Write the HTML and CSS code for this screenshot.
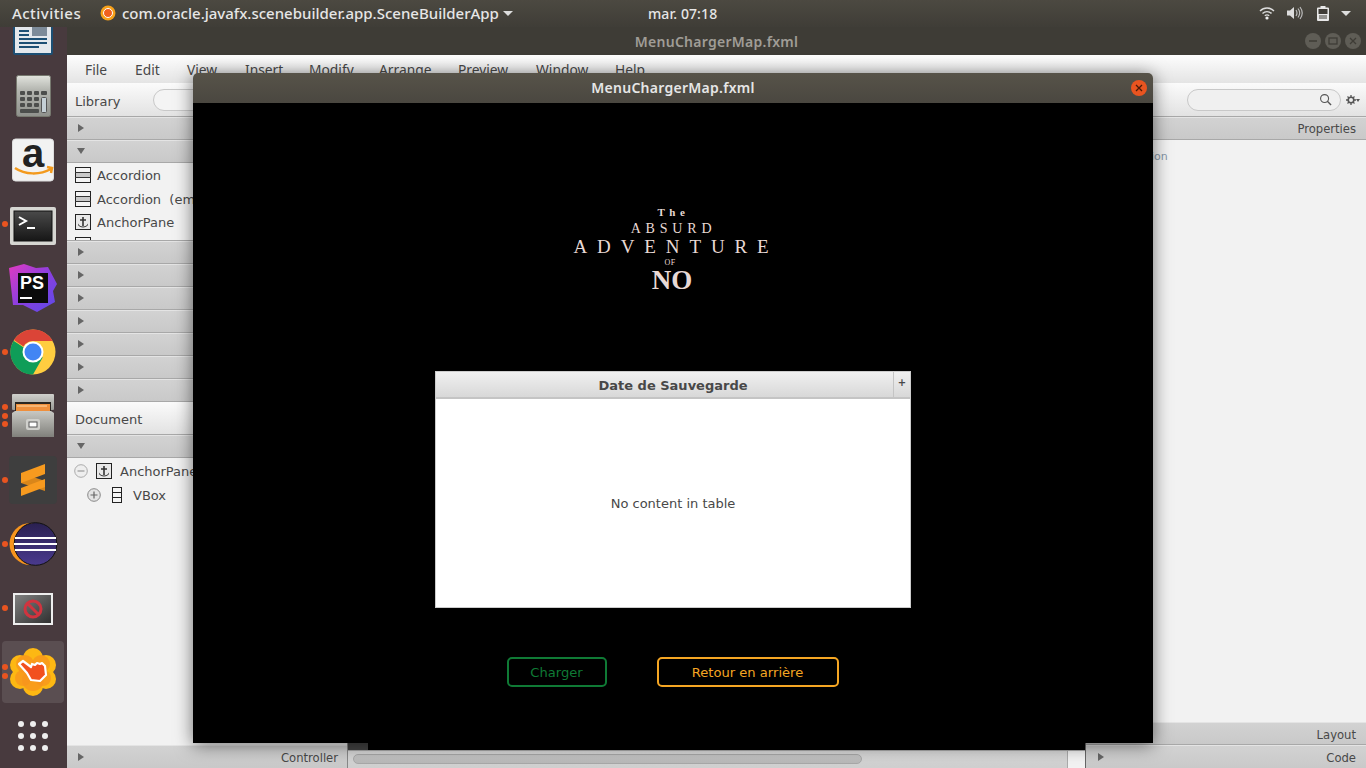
FILE: index.html
```html
<!DOCTYPE html>
<html lang="fr">
<head>
<meta charset="utf-8">
<title>MenuChargerMap.fxml</title>
<link rel="stylesheet" href="styles.css">
</head>
<body>
<svg class="defs" width="0" height="0" aria-hidden="true">
  <defs>
    <symbol id="acc" viewBox="0 0 16 16"><rect x=".5" y=".5" width="15" height="15" fill="#f4f4f4" stroke="#222"/><rect x="1" y="5" width="14" height="6" fill="#c9c9c9"/><path d="M0 5.500h16M0 10.500h16" stroke="#333"/></symbol>
    <symbol id="anc" viewBox="0 0 16 16"><rect x=".5" y=".5" width="15" height="15" fill="#e8e8e8" stroke="#222"/><path d="M8 3v9M5 6h6" fill="none" stroke="#333" stroke-width="1.600"/><path d="M3 9.500c.8 2 2.500 3 5 3s4.200-1 5-3v1.500c-1 1.500-2.800 2.500-5 2.500s-4-1-5-2.500z" fill="#333"/></symbol>
    <symbol id="arrow-r" viewBox="0 0 6 8"><path d="M0 0l6 4-6 4z" fill="#666"/></symbol>
    <symbol id="arrow-d" viewBox="0 0 8 6"><path d="M0 0h8l-4 6z" fill="#666"/></symbol>
  </defs>
</svg>

<div class="desktop">
  <nav class="dock">
    <div class="dock-item">
      <svg viewBox="0 0 64 64"><rect x="12" y="8" width="40" height="47" rx="2" fill="#1c4f74"/><rect x="14" y="10" width="36" height="43" fill="#e4e8ec"/><rect x="31" y="27" width="15" height="9" fill="#7d8b99"/><path d="M18 31h10M18 35h10M18 39h28M18 43h28M18 47h20" stroke="#1c4f74" stroke-width="2"/></svg>
    </div>
    <div class="dock-item">
      <svg viewBox="0 0 64 64"><defs><linearGradient id="cg" x1="0" y1="0" x2="0" y2="1"><stop offset="0" stop-color="#e2e4de"/><stop offset=".35" stop-color="#b4b6b0"/><stop offset="1" stop-color="#8f918c"/></linearGradient></defs><rect x="15.500" y="11.500" width="34" height="41" rx="2" fill="url(#cg)" stroke="#77796f"/><g fill="#4c4e4c"><rect x="19" y="27" width="5" height="4" rx="1"/><rect x="26" y="27" width="5" height="4" rx="1"/><rect x="33" y="27" width="5" height="4" rx="1"/><rect x="40" y="27" width="6" height="4" rx="1"/><rect x="19" y="33" width="5" height="4" rx="1"/><rect x="26" y="33" width="5" height="4" rx="1"/><rect x="33" y="33" width="5" height="4" rx="1"/><rect x="19" y="39" width="5" height="4" rx="1"/><rect x="26" y="39" width="5" height="4" rx="1"/><rect x="33" y="39" width="5" height="4" rx="1"/><rect x="19" y="45" width="19" height="4" rx="1"/></g><rect x="40.500" y="33.500" width="5" height="15" rx="1" fill="#c5d0d6" stroke="#555"/></svg>
    </div>
    <div class="dock-item">
      <svg viewBox="0 0 64 64"><rect x="11.500" y="11" width="41" height="42" rx="3" fill="#f2f2f2" stroke="#ddd"/><text class="amz" x="32" y="39" text-anchor="middle">a</text><path d="M14 40c10 7 25 7 36 1M46 39l5 1-1 5" fill="none" stroke="#f39a1e" stroke-width="2.500"/></svg>
    </div>
    <div class="dock-item has-dot">
      <span class="dot dot-a"></span>
      <svg viewBox="0 0 64 64"><defs><linearGradient id="tg" x1="0" y1="0" x2="0" y2="1"><stop offset="0" stop-color="#4a4a4a"/><stop offset="1" stop-color="#161616"/></linearGradient></defs><rect x="9" y="15" width="46" height="38" rx="2" fill="#d6d6d2"/><rect x="13" y="19" width="38" height="30" fill="url(#tg)" stroke="#111"/><path d="M18 25l7 4-7 4" fill="none" stroke="#fff" stroke-width="2"/><path d="M26 36h8" stroke="#fff" stroke-width="2"/></svg>
    </div>
    <div class="dock-item">
      <svg viewBox="0 0 64 64"><defs><linearGradient id="pg" x1="0" y1="0" x2="1" y2="1"><stop offset="0" stop-color="#e23ac0"/><stop offset=".5" stop-color="#8b3fe0"/><stop offset="1" stop-color="#5a4be8"/></linearGradient></defs><path d="M8 12l15-4 12 4 12-1 9 17-4 7 2 11-18 10-14-7-10 0z" fill="url(#pg)"/><rect x="17" y="17" width="30" height="30" fill="#0b0b0b"/><text class="ps" x="19" y="33">PS</text><rect x="19" y="41" width="12" height="2" fill="#fff"/></svg>
    </div>
    <div class="dock-item has-dot">
      <span class="dot dot-a"></span>
      <svg viewBox="0 0 64 64"><circle cx="32" cy="32" r="22.500" fill="#ffcd40"/><path d="M32 54.500A22.500 22.500 0 0 1 12.500 20.700L22 27l10 5 9.700 5.500-9.700 17z" fill="#0f9d58"/><path d="M51.700 21H32a11 11 0 0 0-9.500 5.500L13 20A22.500 22.500 0 0 1 51.700 21z" fill="#db4437"/><circle cx="32" cy="32" r="10.500" fill="#fff"/><circle cx="32" cy="32" r="8.500" fill="#4285f4"/></svg>
    </div>
    <div class="dock-item has-dot">
      <span class="dot dot-b"></span><span class="dot dot-a"></span><span class="dot dot-c"></span>
      <svg viewBox="0 0 64 64"><defs><linearGradient id="fg" x1="0" y1="0" x2="0" y2="1"><stop offset="0" stop-color="#c8c8c3"/><stop offset="1" stop-color="#80807b"/></linearGradient><linearGradient id="fh" x1="0" y1="0" x2="0" y2="1"><stop offset="0" stop-color="#d0d0cc"/><stop offset="1" stop-color="#9a9a95"/></linearGradient></defs><rect x="11" y="10" width="42" height="16" rx="1" fill="url(#fh)"/><rect x="14" y="18" width="36" height="10" fill="#2b2520"/><rect x="15" y="20" width="34" height="8" fill="#ef8f3c"/><path d="M16 22h30" stroke="#ffd9a8"/><path d="M11 29l3-2h36l3 2v24H11z" fill="url(#fg)"/><rect x="25" y="35" width="14" height="11" rx="2" fill="#d0d0cc"/><rect x="28" y="38" width="8" height="5" fill="#fff" stroke="#555"/></svg>
    </div>
    <div class="dock-item has-dot">
      <span class="dot dot-a"></span>
      <svg viewBox="0 0 64 64"><rect x="8" y="8" width="48" height="48" rx="4" fill="#3e3e3e"/><path d="M20 25L44 33V43L20 35Z" fill="#d9861a"/><path d="M20 25L44 16V26L20 35Z" fill="#f79a1f"/><path d="M44 31V39L20 48V40Z" fill="#f79a1f"/></svg>
    </div>
    <div class="dock-item has-dot">
      <span class="dot dot-a"></span>
      <svg viewBox="0 0 64 64"><defs><linearGradient id="eg" x1="0" y1="0" x2="0" y2="1"><stop offset="0" stop-color="#2a2050"/><stop offset="1" stop-color="#4a3a8e"/></linearGradient></defs><circle cx="29.500" cy="32" r="21" fill="#f7941e"/><circle cx="34.500" cy="32" r="21.300" fill="url(#eg)" stroke="#111"/><path d="M14 26h41M13 32h43M14 38h41" stroke="#fff" stroke-width="2.200"/></svg>
    </div>
    <div class="dock-item has-dot">
      <span class="dot dot-a"></span>
      <svg viewBox="0 0 64 64"><defs><linearGradient id="ng" x1="0" y1="0" x2="1" y2="1"><stop offset="0" stop-color="#808080"/><stop offset="1" stop-color="#303030"/></linearGradient></defs><rect x="12" y="17" width="40" height="32" fill="#eee"/><rect x="14" y="19" width="36" height="28" fill="url(#ng)"/><circle cx="32" cy="33" r="8" fill="none" stroke="#d0343f" stroke-width="3"/><path d="M26.500 27.500l11 11" stroke="#d0343f" stroke-width="3"/></svg>
    </div>
    <div class="dock-item active has-dot">
      <span class="dot dot-d"></span><span class="dot dot-e"></span>
      <svg viewBox="0 0 64 64"><g fill="#fdb813"><circle cx="32" cy="18" r="10"/><circle cx="32" cy="46" r="10"/><circle cx="19" cy="25" r="10"/><circle cx="45" cy="25" r="10"/><circle cx="19" cy="39" r="10"/><circle cx="45" cy="39" r="10"/></g><g fill="#f7941e" fill-opacity=".75"><circle cx="24" cy="24" r="9"/><circle cx="40" cy="24" r="9"/><circle cx="32" cy="40" r="11"/><circle cx="22" cy="38" r="8"/><circle cx="42" cy="38" r="8"/></g><path d="M18 24l4-3 8 6 1-3 3 1 2-2 3 1 2-1 3 3 1 9-6 6-9-1-4-7-8-9z" fill="#f2501e" stroke="#fff" stroke-width="2.200" stroke-linejoin="round"/></svg>
    </div>
    <div class="dock-item">
      <svg viewBox="0 0 64 64"><g fill="#eeeeee"><circle cx="20" cy="20" r="3"/><circle cx="32" cy="20" r="3"/><circle cx="44" cy="20" r="3"/><circle cx="20" cy="32" r="3"/><circle cx="32" cy="32" r="3"/><circle cx="44" cy="32" r="3"/><circle cx="20" cy="44" r="3"/><circle cx="32" cy="44" r="3"/><circle cx="44" cy="44" r="3"/></g></svg>
    </div>
  </nav>

  <header class="top-panel">
    <span class="activities">Activities</span>
    <span class="app-menu">
      <svg class="app-icon" viewBox="0 0 16 16"><circle cx="8" cy="8" r="7.500" fill="#f7a11a"/><circle cx="8" cy="8" r="4.500" fill="#f0601e" stroke="#fff"/></svg>
      <span>com.oracle.javafx.scenebuilder.app.SceneBuilderApp</span>
      <svg class="caret" viewBox="0 0 10 5"><path d="M0 0h10L5 5z" fill="#ddd"/></svg>
    </span>
    <span class="clock">mar. 07:18</span>
    <span class="tray">
      <svg class="tray-wifi" viewBox="0 0 16 14"><path d="M1 5c4-4 10-4 14 0M3.500 7.500c2.600-2.500 6.400-2.500 9 0M5.800 9.800c1.300-1.100 3.100-1.100 4.400 0" fill="none" stroke="#ddd" stroke-width="1.400"/><circle cx="8" cy="12" r="1.600" fill="#eee"/></svg>
      <svg class="tray-vol" viewBox="0 0 16 14"><path d="M0 4.500h3L7 1v12L3 9.500H0z" fill="#ddd"/><path d="M9 4c1.200 1.800 1.200 4.200 0 6M11 2.500c2 2.700 2 6.300 0 9M13 1c2.700 3.600 2.700 8.400 0 12" fill="none" stroke="#bbb" stroke-width="1.200"/></svg>
      <svg class="tray-bat" viewBox="0 0 12 15"><path d="M3.500 0h5v1.500H11a1 1 0 0 1 1 1V14a1 1 0 0 1-1 1H1a1 1 0 0 1-1-1V2.500a1 1 0 0 1 1-1h2.500z" fill="#e8e8e8"/><rect x="1.500" y="3" width="9" height="5" fill="#3f3c37"/><path d="M2 10h8M2 12h8" stroke="#3f3c37"/></svg>
      <svg class="caret" viewBox="0 0 10 5"><path d="M0 0h10L5 5z" fill="#ddd"/></svg>
    </span>
  </header>

  <section class="app-window">
    <div class="title-bar">
      <span class="title-text">MenuChargerMap.fxml</span>
      <span class="win-buttons">
        <span class="win-btn"><svg viewBox="0 0 16 16"><path d="M4 8h8" stroke="#3e3c36" stroke-width="1.500"/></svg></span>
        <span class="win-btn"><svg viewBox="0 0 16 16"><rect x="4" y="5" width="8" height="6" fill="none" stroke="#3e3c36" stroke-width="1.300"/></svg></span>
        <span class="win-btn"><svg viewBox="0 0 16 16"><path d="M5 5l6 6M11 5l-6 6" stroke="#3e3c36" stroke-width="1.300"/></svg></span>
      </span>
    </div>
    <div class="menu-bar">
      <span class="menu-item m-file">File</span>
      <span class="menu-item m-edit">Edit</span>
      <span class="menu-item m-view">View</span>
      <span class="menu-item m-insert">Insert</span>
      <span class="menu-item m-modify">Modify</span>
      <span class="menu-item m-arrange">Arrange</span>
      <span class="menu-item m-preview">Preview</span>
      <span class="menu-item m-window">Window</span>
      <span class="menu-item">Help</span>
    </div>
    <div class="workspace">
      <aside class="left-pane">
        <div class="head head-lib"><span>Library</span><span class="search-stub"></span></div>
        <div class="row"><svg class="ar"><use href="#arrow-r"/></svg></div>
        <div class="row"><svg class="ad"><use href="#arrow-d"/></svg></div>
        <ul class="lib-list">
          <li class="r-a"><svg class="ic"><use href="#acc"/></svg>Accordion</li>
          <li class="r-b"><svg class="ic"><use href="#acc"/></svg>Accordion &nbsp;(empty)</li>
          <li class="r-c"><svg class="ic"><use href="#anc"/></svg>AnchorPane</li>
          <li class="r-d"><svg class="ic"><use href="#acc"/></svg></li>
        </ul>
        <div class="row"><svg class="ar"><use href="#arrow-r"/></svg></div>
        <div class="row"><svg class="ar"><use href="#arrow-r"/></svg></div>
        <div class="row"><svg class="ar"><use href="#arrow-r"/></svg></div>
        <div class="row"><svg class="ar"><use href="#arrow-r"/></svg></div>
        <div class="row"><svg class="ar"><use href="#arrow-r"/></svg></div>
        <div class="row"><svg class="ar"><use href="#arrow-r"/></svg></div>
        <div class="row"><svg class="ar"><use href="#arrow-r"/></svg></div>
        <div class="head head-doc"><span>Document</span></div>
        <div class="row"><svg class="ad"><use href="#arrow-d"/></svg></div>
        <div class="tree">
          <div class="tree-row t-a">
            <svg class="toggle" viewBox="0 0 14 14"><circle cx="7" cy="7" r="6.300" fill="#eee" stroke="#aaa"/><path d="M3.500 7h7" stroke="#999" stroke-width="1.200"/></svg>
            <svg class="ic"><use href="#anc"/></svg><span>AnchorPane</span>
          </div>
          <div class="tree-row t-b">
            <svg class="toggle" viewBox="0 0 14 14"><circle cx="7" cy="7" r="6.300" fill="#e4e4e4" stroke="#888"/><path d="M3.500 7h7M7 3.500v7" stroke="#666" stroke-width="1.200"/></svg>
            <svg class="ic-v" viewBox="0 0 10 16"><rect x=".5" y=".5" width="9" height="15" fill="#f4f4f4" stroke="#222"/><path d="M0 5.500h10M0 10.500h10" stroke="#222"/></svg><span>VBox</span>
          </div>
        </div>
        <div class="row row-end"><svg class="ar"><use href="#arrow-r"/></svg><span>Controller</span></div>
      </aside>

      <main class="center-pane">
        <div class="canvas"><span class="canvas-mark"></span></div>
        <div class="scroll-row">
          <div class="scroll-track"><div class="scroll-thumb"></div></div>
          <div class="scroll-corner"></div>
        </div>
      </main>

      <aside class="right-pane">
        <div class="head head-right">
          <span class="search"><svg viewBox="0 0 14 14"><circle cx="6" cy="6" r="4.300" fill="none" stroke="#555" stroke-width="1.200"/><path d="M9 9l4 4" stroke="#555" stroke-width="1.500"/></svg></span>
          <svg class="gear" viewBox="0 0 14 10"><circle cx="5" cy="5" r="2.800" fill="none" stroke="#555" stroke-width="1.600"/><path d="M5 0v2M5 8v2M0 5h2M8 5h2M1.500 1.500l1.400 1.400M8.500 1.500L7.100 2.900M1.500 8.500l1.400-1.400M8.500 8.500L7.100 7.100" stroke="#555" stroke-width="1.300"/><path d="M10 4h4l-2 3z" fill="#555"/></svg>
        </div>
        <div class="row row-right row-props"><span>Properties</span></div>
        <div class="inspector"><span>Selection</span></div>
        <div class="row row-right"><span>Layout</span></div>
        <div class="row row-right row-code"><svg class="ar"><use href="#arrow-r"/></svg><span>Code</span></div>
      </aside>
    </div>
  </section>

  <section class="modal">
    <div class="modal-title">
      <span>MenuChargerMap.fxml</span>
      <span class="modal-close"><svg viewBox="0 0 16 16"><path d="M5 5l6 6M11 5l-6 6" stroke="#4a1a08" stroke-width="1.300"/></svg></span>
    </div>
    <div class="modal-body">
      <div class="logo">
        <div class="l-the">The</div>
        <div class="l-absurd">ABSURD</div>
        <div class="l-adv">ADVENTURE</div>
        <div class="l-of">OF</div>
        <div class="l-no">NO</div>
      </div>
      <div class="table">
        <div class="table-head">
          <div class="col-title">Date de Sauvegarde</div>
          <div class="col-plus">+</div>
        </div>
        <div class="table-body">No content in table</div>
      </div>
      <div class="actions">
        <button class="btn btn-green">Charger</button>
        <button class="btn btn-orange">Retour en arrière</button>
      </div>
    </div>
  </section>
</div>
</body>
</html>
```

FILE: styles.css
```css
* { box-sizing: border-box; }
html, body { margin: 0; height: 100%; overflow: hidden; }
body { font-family: "DejaVu Sans", sans-serif; background: #000; }
.defs { position: absolute; }
svg { display: block; }

.desktop {
  position: relative;
  width: 1366px;
  height: 768px;
  overflow: hidden;
  background: #3e3c36;
}

/* dock */
.dock {
  position: absolute;
  left: 0;
  top: 0;
  width: 67px;
  height: 768px;
  background: #483a3e;
  display: flex;
  flex-direction: column;
}
.dock-item {
  position: relative;
  height: 64px;
  flex: none;
  padding-left: 1px;
}
.dock-item svg { width: 64px; height: 64px; }
.dock-item.active::before {
  content: "";
  position: absolute;
  left: 2px;
  top: 1px;
  width: 62px;
  height: 62px;
  border-radius: 4px;
  background: rgba(255,255,255,.1);
}
.dock-item.active svg { position: relative; }
.dot {
  position: absolute;
  left: 2px;
  width: 6px;
  height: 6px;
  border-radius: 50%;
  background: #e95420;
  z-index: 1;
}
.dot-a { top: 29px; }
.dot-b { top: 20px; }
.dot-c { top: 37px; }
.dot-d { top: 24px; }
.dot-e { top: 33px; }
.amz { font: 700 40px "Liberation Sans", sans-serif; fill: #222; }
.ps { font: 700 18px "Liberation Sans", sans-serif; fill: #fff; }

/* top panel */
.top-panel {
  position: absolute;
  left: 0;
  top: 0;
  width: 1366px;
  height: 27px;
  padding-bottom: 1px;
  background: linear-gradient(#4c4941, #3f3d37);
  color: #e6e6e6;
  font-family: "Noto Sans", sans-serif;
  font-weight: 500;
  font-size: 15px;
  display: flex;
  align-items: center;
  z-index: 3;
}
.activities { margin-left: 12px; width: 88px; letter-spacing: .45px; }
.app-menu { display: flex; align-items: center; gap: 6px; width: 548px; }
.app-menu .caret { margin-left: -2px; }
.app-icon { width: 16px; height: 16px; }
.caret { width: 10px; height: 5px; }
.clock { width: 72px; white-space: nowrap; font-size: 14px; letter-spacing: .1px; }
.tray { margin-left: auto; margin-right: 15px; display: flex; align-items: center; }
.tray-wifi { width: 16px; height: 14px; }
.tray-vol { width: 16px; height: 14px; margin-left: 12px; }
.tray-bat { width: 12px; height: 15px; margin-left: 14px; }
.tray .caret { margin-left: 12px; }

/* application window */
.app-window {
  position: absolute;
  left: 67px;
  top: 27px;
  width: 1299px;
  height: 741px;
  display: flex;
  flex-direction: column;
  background: #f2f2f2;
}
.title-bar {
  height: 28px;
  flex: none;
  background: #3e3c36;
  display: flex;
  align-items: center;
  position: relative;
  justify-content: center;
  color: #a09d96;
  font-family: "Noto Sans", sans-serif;
  font-weight: 600;
  font-size: 14px;
  letter-spacing: .27px;
}
.win-buttons {
  position: absolute;
  right: 5px;
  top: 6px;
  display: flex;
  gap: 4px;
}
.win-btn {
  width: 16px;
  height: 16px;
  border-radius: 50%;
  background: #5f5d56;
}
.menu-bar {
  height: 28px;
  flex: none;
  display: flex;
  align-items: center;
  padding: 1px 0 0 18px;
  background: linear-gradient(#fdfdfd, #e4e4e4);
  color: #484848;
  font-family: "Noto Sans", sans-serif;
  font-size: 13.8px;
}
.m-file { width: 50px; }
.m-edit { width: 52px; }
.m-view { width: 58px; }
.m-insert { width: 64px; }
.m-modify { width: 70px; }
.m-arrange { width: 79px; }
.m-preview { width: 78px; }
.m-window { width: 79px; }

.workspace { flex: 1; min-height: 0; display: flex; }
.head {
  height: 34px;
  flex: none;
  display: flex;
  align-items: center;
  padding-left: 8px;
  border-bottom: 1px solid #a8a8a8;
  background: linear-gradient(#fbfbfb, #e2e2e2);
  color: #484848;
  font-size: 13px;
}
.head-lib > span:first-child { padding-top: 4px; }
.head-doc { height: 33px; padding-top: 2px; }
.search-stub {
  margin-left: 33px;
  width: 120px;
  height: 22px;
  border: 1px solid #c8c8c8;
  border-radius: 11px;
  background: #f4f4f4;
}
.row {
  height: 23px;
  flex: none;
  display: flex;
  align-items: center;
  padding-left: 10px;
  border-bottom: 1px solid #a8a8a8;
  border-top: 1px solid #e4e4e4;
  background: linear-gradient(#d2d2d2, #c9c9c9);
  color: #484848;
  font-size: 11.6px;
}
.row > span { padding-top: 2px; }
.row-props > span { padding-top: 0; }
.ar { width: 6px; height: 8px; margin: 0 0 2px 1px; }
.ad { width: 8px; height: 6px; margin-bottom: 2px; }

.left-pane {
  width: 281px;
  flex: none;
  display: flex;
  flex-direction: column;
  border-right: 1px solid #888;
}
.lib-list {
  list-style: none;
  margin: 0;
  padding: 0;
  height: 78px;
  flex: none;
  overflow: hidden;
  font-size: 13px;
  color: #484848;
  border-bottom: 1px solid #a8a8a8;
}
.lib-list li {
  display: flex;
  align-items: center;
  gap: 6px;
  padding-left: 8px;
  height: 24px;
  white-space: nowrap;
}
.lib-list .r-c { height: 22px; }
.ic { width: 16px; height: 16px; flex: none; }
.tree { flex: 1; padding-top: 1px; font-size: 13px; color: #484848; }
.tree-row { display: flex; align-items: center; height: 24px; }
.t-a { padding-left: 7px; }
.t-a .ic { margin-left: 8px; margin-right: 8px; }
.t-b { padding-left: 20px; }
.t-b .ic-v { margin-left: 11px; margin-right: 11px; }
.toggle { width: 14px; height: 14px; flex: none; }
.ic-v { width: 10px; height: 16px; flex: none; }
.row-end { justify-content: space-between; padding-right: 9px; border-bottom: 0; }
.row-end .ar { margin-bottom: 0; }

.center-pane { flex: 1; min-width: 0; display: flex; flex-direction: column; }
.canvas { flex: 1; background: #000; position: relative; }
.canvas-mark {
  position: absolute;
  left: 0;
  bottom: 0;
  width: 20px;
  height: 7px;
  background: #444;
}
.scroll-row {
  height: 18px;
  flex: none;
  display: flex;
  background: #c8c8c8;
  border-top: 1px solid #aaa;
}
.scroll-track { flex: 1; padding: 3px 5px; background: linear-gradient(#d8d8d8, #cfcfcf); }
.scroll-thumb {
  width: 509px;
  height: 10px;
  border-radius: 5px;
  background: linear-gradient(#c4c4c4, #b8b8b8);
  border: 1px solid #a8a8a8;
}
.scroll-corner { width: 18px; background: #f2f2f2; border-left: 1px solid #aaa; }

.right-pane {
  width: 281px;
  flex: none;
  display: flex;
  flex-direction: column;
  border-left: 1px solid #666;
}
.head-right { padding-left: 101px; gap: 5px; }
.search {
  width: 154px;
  height: 22px;
  border: 1px solid #c8c8c8;
  border-radius: 11px;
  background: #f0f0f0;
  display: flex;
  align-items: center;
  justify-content: flex-end;
  padding-right: 8px;
}
.search svg { width: 13px; height: 13px; }
.gear { width: 14px; height: 10px; }
.row-right { justify-content: flex-end; padding-right: 10px; }
.row-code { justify-content: space-between; border-bottom: 0; padding-left: 11px; }
.row-code .ar { margin-bottom: 0; }
.inspector {
  flex: 1;
  padding: 10px 0 0 31px;
  font-size: 11px;
  color: #8597a8;
}

/* modal */
.modal {
  position: absolute;
  left: 193px;
  top: 73px;
  width: 960px;
  height: 670px;
  display: flex;
  flex-direction: column;
  border-radius: 5px 5px 0 0;
  box-shadow: 0 2px 18px rgba(0,0,0,.55);
  z-index: 2;
}
.modal-title {
  height: 30px;
  flex: none;
  position: relative;
  display: flex;
  align-items: center;
  justify-content: center;
  padding-bottom: 2px;
  border-radius: 5px 5px 0 0;
  background: linear-gradient(#575349, #4a4740);
  color: #e6e6e6;
  font-family: "Noto Sans", sans-serif;
  font-weight: 600;
  font-size: 14px;
  letter-spacing: .27px;
}
.modal-close {
  position: absolute;
  right: 6px;
  top: 7px;
  width: 16px;
  height: 16px;
  border-radius: 50%;
  background: #e95420;
}
.modal-body {
  flex: 1;
  background: #000;
  display: flex;
  flex-direction: column;
  align-items: center;
  padding-top: 104px;
}
.logo {
  width: 240px;
  height: 88px;
  margin-left: -2px;
  font-family: "Liberation Serif", serif;
  color: #e8d9d5;
  text-align: center;
  line-height: 1;
}
.l-the { font-size: 11px; letter-spacing: 4.6px; height: 14px; font-weight: 700; padding-left: 3px; }
.l-absurd { font-size: 14px; letter-spacing: 4.8px; height: 17px; margin-top: 1px; padding-left: 3px; }
.l-adv { font-size: 19px; letter-spacing: 9.9px; height: 19px; margin-top: -2px; padding-left: 8px; }
.l-of { font-size: 8px; letter-spacing: .5px; height: 9px; margin-top: 3px; margin-left: -4px; }
.l-no { font-size: 27px; font-weight: 700; height: 24px; margin-top: -1px; }
.table {
  width: 476px;
  height: 237px;
  margin-top: 76px;
  flex: none;
  display: flex;
  flex-direction: column;
  background: #fff;
  border: 1px solid #ccc;
}
.table-head {
  height: 27px;
  flex: none;
  display: flex;
  background: linear-gradient(#f0f0f0, #d8d8d8);
  border-bottom: 2px solid #c4c4c4;
  color: #484848;
  font-size: 13px;
  font-weight: 700;
}
.col-title {
  flex: 1;
  display: flex;
  align-items: center;
  justify-content: center;
  padding: 2px 0 0 17px;
}
.col-plus {
  width: 17px;
  border-left: 1px solid #c4c4c4;
  text-align: center;
  font-size: 10px;
  font-weight: 700;
  line-height: 22px;
}
.table-body {
  flex: 1;
  display: flex;
  align-items: center;
  justify-content: center;
  color: #484848;
  font-size: 13px;
  padding-top: 1px;
}
.actions {
  display: flex;
  gap: 50px;
  margin-top: 49px;
  margin-left: -1px;
}
.btn {
  height: 30px;
  padding: 0;
  background: transparent;
  border-radius: 5px;
  border-width: 2px;
  border-style: solid;
  font-family: "DejaVu Sans", sans-serif;
  font-size: 13.1px;
}
.btn-green { width: 100px; border-color: #0f7a35; color: #0f7a35; }
.btn-orange { width: 182px; border-color: #f5a623; color: #f5a623; }
```
